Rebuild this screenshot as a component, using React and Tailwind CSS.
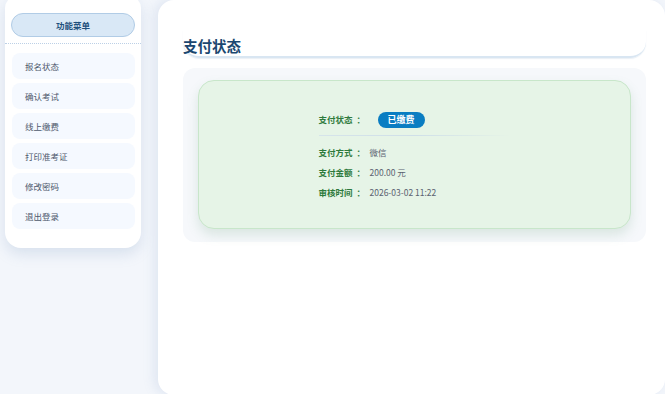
import React from "react";

const menuItems = ["报名状态", "确认考试", "线上缴费", "打印准考证", "修改密码", "退出登录"];

const details = [
  { label: "支付方式", value: "微信" },
  { label: "支付金额", value: "200.00 元" },
  { label: "审核时间", value: "2026-03-02 11:22" },
];

function Label({ text, width }) {
  return (
    <span className={`${width} text-[8.5px] font-bold text-[#2e7a3c] flex`}>
      {text}
      <span className="ml-[4px]">：</span>
    </span>
  );
}

export default function App() {
  return (
    <div
      className="w-full h-[394px] overflow-hidden bg-[#f3f6fb] flex"
      style={{ fontFamily: '"Noto Sans CJK SC", "Noto Sans", sans-serif' }}
    >
      {/* ===== Sidebar ===== */}
      <aside className="w-[158px] shrink-0 pl-[5px] pr-[17px]">
        <div className="bg-white rounded-b-2xl rounded-t-xl -mt-[4px] pt-[17px] pb-[19px] shadow-[0_6px_14px_rgba(120,150,190,0.22)]">
          <div className="px-[6px]">
            <div className="h-[24px] rounded-full bg-[#d9e8f6] border border-[#b1cce6] flex items-center justify-center text-[8.5px] font-bold text-[#1e4f7c]">
              功能菜单
            </div>
          </div>
          <div className="mt-[6px] border-b border-dotted border-[#bcd0e6]" />
          <nav className="mt-[9px] pl-[7px] pr-[6px] flex flex-col gap-[4px]">
            {menuItems.map((item) => (
              <div
                key={item}
                className="h-[26px] rounded-lg bg-[#f5f9ff] flex items-center pl-[13px] text-[8.5px] text-[#4d586c]"
              >
                {item}
              </div>
            ))}
          </nav>
        </div>
      </aside>

      {/* ===== Main ===== */}
      <main className="flex-1 bg-white rounded-2xl -mb-[1px] pl-[25px] pr-[19px] pt-[30px] shadow-[-4px_0_12px_rgba(120,150,190,0.16)]">
        <div className="h-[28px] flex items-end pb-[3px] rounded-b-2xl border-b-2 border-[#d9e6f2] shadow-[0_1px_1px_rgba(150,180,210,0.2)]">
          <h1 className="text-[14.5px] font-bold text-[#1b4770] leading-none">支付状态</h1>
        </div>

        <section className="mt-[10px] bg-[#f6f8fb] rounded-xl px-[15px] pt-[12px] pb-[13px]">
          <div className="h-[149px] rounded-2xl bg-[#e6f4e7] border border-[#c8e6ca] shadow-[0_6px_12px_rgba(90,150,110,0.18)] flex justify-center pt-[30px]">
            <div className="w-[192px]">
              <div className="flex items-center h-[17px]">
                <Label text="支付状态" width="w-[59px]" />
                <span className="h-[16px] px-[10px] rounded-full bg-[#0a7dc2] text-white text-[9px] font-bold flex items-center">
                  已缴费
                </span>
              </div>
              <div className="mt-[7px] h-px bg-gradient-to-r from-[#d6e4ea] via-[#cfdfe8] to-transparent" />
              <div className="mt-[6px] flex flex-col">
                {details.map((d) => (
                  <div key={d.label} className="flex items-center h-[20px]">
                    <Label text={d.label} width="w-[51px]" />
                    <span className="text-[8.5px] text-[#5a6270]">{d.value}</span>
                  </div>
                ))}
              </div>
            </div>
          </div>
        </section>
      </main>
    </div>
  );
}
